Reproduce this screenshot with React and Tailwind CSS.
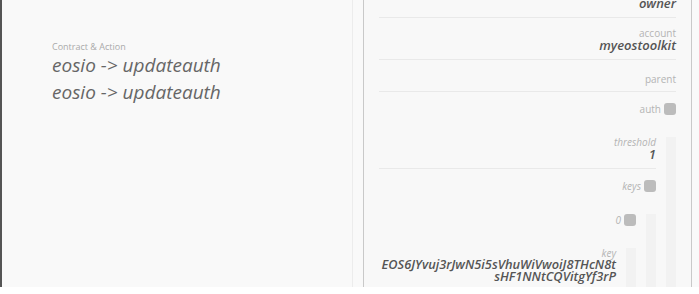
import clsx from "clsx";

const KEY = "EOS6JYvuj3rJwN5i5sVhuWiVwoiJ8THcN8tsHF1NNtCQVitgYf3rP";

const Field = ({ label, value, italic, first, mono }) => (
  <div
    className={clsx(
      "border-b border-[#e9e9e9] pb-[7px] text-right",
      first ? "pt-0" : "pt-[10px]"
    )}
  >
    <div
      className={clsx(
        "text-[10px] leading-[10px] text-[#b4b4b4]",
        italic && "italic"
      )}
    >
      {label}
    </div>
    {value && !mono && (
      <div className="text-[13px] leading-[14px] font-semibold italic text-[#555]">
        {value}
      </div>
    )}
    {value && mono && (
      <div className="text-[12.8px] leading-[12px] font-semibold italic text-[#555] break-all">
        {value}
      </div>
    )}
  </div>
);

const Group = ({ label, italic, first, children }) => (
  <div className={first ? "pt-0" : "pt-[11px]"}>
    <div className="flex items-center justify-end gap-[3px] h-[12px]">
      <span
        className={clsx(
          "text-[10px] leading-[10px] text-[#b4b4b4]",
          italic && "italic"
        )}
      >
        {label}
      </span>
      <span className="w-[12px] h-[12px] rounded-[3px] bg-[#bcbcbc]" />
    </div>
    <div className="mt-[22px] border-r-[10px] border-[#f2f2f2] pr-[10px]">
      {children}
    </div>
  </div>
);

const App = () => {
  return (
    <div className="w-full h-[287px] flex bg-[#f9f9f9] font-['Open_Sans',sans-serif] overflow-hidden">
      <div className="w-[2px] shrink-0 bg-[#555]" />

      {/* transaction summary */}
      <div className="w-[351px] shrink-0 border-r border-[#ececec] pl-[50px] pt-[42px]">
        <div className="text-[9px] leading-[10px] text-[#aaa]">
          Contract &amp; Action
        </div>
        <div className="text-[19px] leading-[27px] font-medium italic text-[#666]">
          eosio -&gt; updateauth
        </div>
        <div className="text-[19px] leading-[27px] font-medium italic text-[#666]">
          eosio -&gt; updateauth
        </div>
      </div>

      <div className="w-[10px] shrink-0" />

      {/* action data */}
      <div className="w-[329px] shrink-0 border-x border-[#c9c9c9] bg-[#f8f8f8] px-[15px] overflow-hidden">
        <div className="-mt-[14px]">
          <Field label="permission" value="owner" first />
          <Field label="account" value="myeostoolkit" />
          <div className="border-b border-[#e9e9e9] pt-[14px] pb-[7px] text-right">
            <div className="text-[10px] leading-[10px] text-[#b4b4b4]">parent</div>
          </div>
          <Group label="auth">
            <Field label="threshold" value="1" italic first />
            <Group label="keys" italic>
              <Group label="0" italic first>
                <Field label="key" value={KEY} italic first mono />
                <Field label="weight" value="1" italic />
              </Group>
            </Group>
            <Group label="accounts" italic />
            <Group label="waits" italic />
          </Group>
        </div>
      </div>
    </div>
  );
};

export default App;
